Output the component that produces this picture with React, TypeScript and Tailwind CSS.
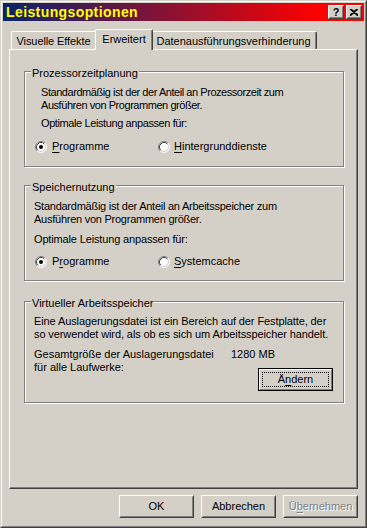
import React from 'react';

const FONT = "font-['Liberation_Sans',Arial,sans-serif]";

function Radio({ checked }: { checked?: boolean }) {
  return (
    <svg width="12" height="12" viewBox="0 0 12 12" className="shrink-0">
      <circle cx="6" cy="6" r="5" fill="#fff" />
      <path d="M2.11 9.89 A5.5 5.5 0 0 1 9.89 2.11" fill="none" stroke="#808080" />
      <path d="M9.89 2.11 A5.5 5.5 0 0 1 2.11 9.89" fill="none" stroke="#fff" />
      <path d="M2.82 9.18 A4.5 4.5 0 0 1 9.18 2.82" fill="none" stroke="#404040" />
      <path d="M9.18 2.82 A4.5 4.5 0 0 1 2.82 9.18" fill="none" stroke="#d4d0c8" />
      {checked && <circle cx="6" cy="6" r="2" fill="#000" />}
    </svg>
  );
}

const U = ({ children }: { children: React.ReactNode }) => (
  <span className="underline underline-offset-[2px]">{children}</span>
);

function Button({ children, disabled }: { children: React.ReactNode; disabled?: boolean }) {
  return (
    <div className="w-[75px] h-[23px] border border-t-white border-l-white border-r-[#404040] border-b-[#404040]">
      <div
        className={`h-full flex items-center justify-center border border-t-[#d4d0c8] border-l-[#d4d0c8] border-r-[#808080] border-b-[#808080] ${
          disabled ? 'text-[#808080] [text-shadow:1px_1px_0_#fff]' : ''
        }`}
      >
        {children}
      </div>
    </div>
  );
}

function DefaultButton({ children }: { children: React.ReactNode }) {
  return (
    <div className="w-[75px] h-[23px] border border-black">
      <div className="h-full p-[2px] border border-t-white border-l-white border-r-[#808080] border-b-[#808080]">
        <div className="h-full flex items-center justify-center border border-dotted border-black">{children}</div>
      </div>
    </div>
  );
}

function TitleButton({ children }: { children: React.ReactNode }) {
  return (
    <div className="w-[16px] h-[14px] bg-[#d4d0c8] border border-t-white border-l-white border-r-[#404040] border-b-[#404040]">
      <div className="h-full flex items-center justify-center border border-t-[#d4d0c8] border-l-[#d4d0c8] border-r-[#808080] border-b-[#808080]">
        {children}
      </div>
    </div>
  );
}

function Group({ title, className, children }: { title: string; className: string; children: React.ReactNode }) {
  return (
    <div className={`relative w-[320px] border border-[#808080] shadow-[inset_1px_1px_0_#fff,1px_1px_0_#fff] ${className}`}>
      <span className="absolute left-[6px] top-[-5px] px-px bg-[#d4d0c8] tracking-normal">{title}</span>
      {children}
    </div>
  );
}

export default function App() {
  return (
    <div
      className={`w-[367px] h-[528px] bg-[#d4d0c8] text-[11px] leading-[13px] text-black ${FONT} border border-t-[#d4d0c8] border-l-[#d4d0c8] border-r-[#404040] border-b-[#404040]`}
    >
      <div className="h-full flex flex-col p-px border border-t-white border-l-white border-r-[#808080] border-b-[#808080]">
        {/* Title bar */}
        <div className="h-[18px] shrink-0 flex items-center pl-[3px] bg-[linear-gradient(to_right,#0a246a,#ff0000_88%)]">
          <span className="text-[14px] leading-[18px] font-bold tracking-[0.4px] text-[#ffff00]">Leistungsoptionen</span>
          <div className="ml-auto mr-[2px] flex gap-[2px]">
            <TitleButton>
              <span className="text-[11px] leading-[11px] font-bold">?</span>
            </TitleButton>
            <TitleButton>
              <svg width="8" height="7" viewBox="0 0 8 7">
                <path d="M0 0 L8 7 M1 0 L8 6.1 M8 0 L0 7 M7 0 L0 6.1" stroke="#000" strokeWidth="1.2" />
              </svg>
            </TitleButton>
          </div>
        </div>

        {/* Tabs */}
        <div className="mt-[8px] ml-[6px] pl-[2px] h-[20px] flex items-end">
          <div className="w-[84px] h-[18px] pt-[3px] flex justify-center border-t border-l border-white rounded-tl-[2px] tracking-[-0.1px]">
            Visuelle Effekte
          </div>
          <div className="relative z-10 -mb-px w-[58px] h-[21px] pt-[3px] flex justify-center bg-[#d4d0c8] border-t border-l border-r border-t-white border-l-white border-r-[#404040] rounded-t-[2px] shadow-[inset_-1px_0_0_#808080]">
            Erweitert
          </div>
          <div className="w-[164px] h-[18px] pt-[3px] pr-[2px] flex justify-center border-t border-r border-t-white border-r-[#404040] rounded-tr-[2px] shadow-[inset_-1px_0_0_#808080]">
            Datenausführungsverhinderung
          </div>
        </div>

        {/* Panel */}
        <div className="ml-[6px] w-[349px] h-[440px] shrink-0 flex flex-col pl-[14px] border border-t-white border-l-white border-r-[#404040] border-b-[#404040] shadow-[inset_-1px_-1px_0_#808080]">
          <Group title="Prozessorzeitplanung" className="mt-[21px] h-[96px] pl-[10px] pt-[14px]">
            <p className="pl-[6px] whitespace-nowrap tracking-[-0.45px]">
              Standardmäßig ist der der Anteil an Prozessorzeit zum
              <br />
              Ausführen von Programmen größer.
            </p>
            <p className="pl-[6px] mt-[5px] tracking-[-0.4px]">Optimale Leistung anpassen für:</p>
            <div className="mt-[10px] h-[13px] flex items-center">
              <label className="w-[123px] flex items-center gap-[5px]">
                <Radio checked />
                <span>
                  <U>P</U>rogramme
                </span>
              </label>
              <label className="flex items-center gap-[4px]">
                <Radio />
                <span>
                  <U>H</U>intergrunddienste
                </span>
              </label>
            </div>
          </Group>

          <Group title="Speichernutzung" className="mt-[18px] h-[96px] pl-[9px] pt-[14px]">
            <p className="whitespace-nowrap tracking-[-0.25px]">
              Standardmäßig ist der Anteil an Arbeitsspeicher zum
              <br />
              Ausführen von Programmen größer.
            </p>
            <p className="mt-[7px] tracking-[-0.15px]">Optimale Leistung anpassen für:</p>
            <div className="mt-[9px] h-[13px] flex items-center pl-px">
              <label className="w-[123px] flex items-center gap-[5px]">
                <Radio checked />
                <span>
                  P<U>r</U>ogramme
                </span>
              </label>
              <label className="flex items-center gap-[4px]">
                <Radio />
                <span>
                  <U>S</U>ystemcache
                </span>
              </label>
            </div>
          </Group>

          <Group title="Virtueller Arbeitsspeicher" className="mt-[20px] h-[102px] pl-[9px] pt-[13px]">
            <p className="whitespace-nowrap tracking-[-0.1px]">
              Eine Auslagerungsdatei ist ein Bereich auf der Festplatte, der
              <br />
              so verwendet wird, als ob es sich um Arbeitsspeicher handelt.
            </p>
            <div className="mt-[7px] flex">
              <div className="w-[197px]">
                <p>Gesamtgröße der Auslagerungsdatei</p>
                <p>für alle Laufwerke:</p>
              </div>
              <div className="flex flex-col">
                <p>1280 MB</p>
                <div className="mt-[7px] ml-[27px]">
                  <DefaultButton>
                    <span>
                      Ä<U>n</U>dern
                    </span>
                  </DefaultButton>
                </div>
              </div>
            </div>
          </Group>
        </div>

        {/* Dialog buttons */}
        <div className="mt-[6px] ml-[6px] w-[349px] flex justify-end gap-[7px]">
          <Button>OK</Button>
          <Button>Abbrechen</Button>
          <Button disabled>
            <span>
              Ü<U>b</U>ernehmen
            </span>
          </Button>
        </div>
      </div>
    </div>
  );
}
